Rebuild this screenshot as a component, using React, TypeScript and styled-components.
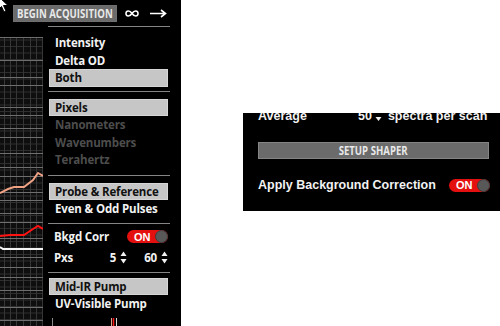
import React from 'react';
import styled, { createGlobalStyle } from 'styled-components';

const GlobalStyle = createGlobalStyle`
  html, body {
    margin: 0;
    padding: 0;
    background: #ffffff;
  }
  body {
    font-family: "Open Sans", "Liberation Sans", sans-serif;
  }
  svg {
    display: block;
  }
`;

type MenuItem = {
  label: string;
  selected?: boolean;
  disabled?: boolean;
};

const Page = styled.div`
  display: flex;
  width: 500px;
  height: 326px;
  overflow: hidden;
`;

const LeftPanel = styled.div`
  position: relative;
  width: 181px;
  height: 326px;
  background: #000;
  display: flex;
  flex-direction: column;
  flex-shrink: 0;
  overflow: hidden;
`;

const TopBar = styled.div`
  height: 26px;
  flex-shrink: 0;
  display: flex;
  align-items: center;
  padding-left: 13px;
  gap: 4px;
  color: #fff;
`;

const GreyButton = styled.button<{ $wide?: boolean }>`
  height: 17px;
  width: ${p => (p.$wide ? '231px' : '104px')};
  padding: 0;
  border: 1px solid ${p => (p.$wide ? '#858585' : '#6f6f6f')};
  background: #6b6b6b;
  color: #e8e8e8;
  font-family: "Open Sans", sans-serif;
  font-weight: 700;
  font-size: 12px;
  display: flex;
  align-items: center;
  justify-content: center;
  overflow: hidden;
  white-space: nowrap;
`;

const Narrow = styled.span`
  display: inline-block;
  transform: scaleX(0.8);
`;

const IconGlyph = styled.span`
  width: 22px;
  display: flex;
  justify-content: center;
`;

const Body = styled.div`
  flex: 1;
  min-height: 0;
  display: flex;
  gap: 5px;
`;

const ChartCol = styled.div`
  width: 43px;
  padding-top: 11px;
`;

const Menu = styled.div`
  width: 122px;
  display: flex;
  flex-direction: column;
`;

const Section = styled.div<{ $top?: number; $bottom?: number }>`
  border-top: 1px solid #858585;
  padding: ${p => p.$top ?? 7}px 2px ${p => p.$bottom ?? 5}px 1px;
  display: flex;
  flex-direction: column;
`;

const Item = styled.div<{ $selected?: boolean; $disabled?: boolean }>`
  height: 17.5px;
  box-sizing: border-box;
  display: flex;
  align-items: center;
  padding-left: 5px;
  font-size: 11.5px;
  letter-spacing: -0.15px;
  font-weight: 700;
  white-space: nowrap;
  color: ${p => (p.$disabled ? '#4d4d4d' : p.$selected ? '#111' : '#f2f2f2')};
  background: ${p => (p.$selected ? '#c6c6c6' : 'transparent')};
  border: 1px solid ${p => (p.$selected ? '#d6d6d6' : 'transparent')};
`;

const ControlRow = styled.div<{ $gapTop?: number }>`
  height: 16px;
  margin-top: ${p => p.$gapTop ?? 0}px;
  display: flex;
  align-items: center;
  padding-left: 5px;
  font-size: 11.5px;
  letter-spacing: -0.15px;
  font-weight: 700;
  color: #f2f2f2;
  white-space: nowrap;
`;

const RowLabel = styled.span`
  flex: 1;
`;

const Spin = styled.div`
  display: flex;
  align-items: center;
  gap: 4px;
  margin-left: 17px;
`;

const Toggle = styled.div`
  width: 41px;
  height: 13px;
  box-sizing: border-box;
  border-radius: 7px;
  background: #e3100f;
  display: flex;
  align-items: center;
  justify-content: space-between;
  padding-left: 7px;
  color: #fff;
  font-family: "Liberation Sans", Arial, sans-serif;
  font-size: 11px;
  font-weight: 700;
  letter-spacing: 0;
`;

const Knob = styled.div`
  width: 13px;
  height: 13px;
  box-sizing: border-box;
  border-radius: 50%;
  background: #585858;
  border: 1px solid #3c3c3c;
`;

const BottomTicks = styled.div`
  margin-top: auto;
  height: 10px;
`;

const Cursor = styled.svg`
  position: absolute;
  left: -3px;
  top: -5px;
`;

const RightArea = styled.div`
  flex: 1;
  padding: 113px 0 0 62px;
`;

const Panel = styled.div`
  width: 257px;
  height: 98px;
  box-sizing: border-box;
  background: #000;
  overflow: hidden;
  padding: 0 10px 0 15px;
  font-family: "Liberation Sans", Arial, sans-serif;
  font-weight: 700;
  font-size: 12.5px;
  color: #f2f2f2;
  display: flex;
  flex-direction: column;
`;

const AverageRow = styled.div`
  margin-top: -5px;
  height: 16px;
  display: flex;
  align-items: center;
  white-space: nowrap;
`;

const AvgLabel = styled.span`
  width: 100px;
`;

const AvgValue = styled.span`
  display: flex;
  align-items: center;
  gap: 3px;
  margin-right: 6px;
`;

const ShaperWrap = styled.div`
  margin-top: 18px;
`;

const ApplyRow = styled.div`
  margin-top: 19px;
  display: flex;
  align-items: center;
  justify-content: space-between;
  white-space: nowrap;
`;

const menuA: MenuItem[] = [
  { label: 'Intensity' },
  { label: 'Delta OD' },
  { label: 'Both', selected: true },
];

const menuB: MenuItem[] = [
  { label: 'Pixels', selected: true },
  { label: 'Nanometers', disabled: true },
  { label: 'Wavenumbers', disabled: true },
  { label: 'Terahertz', disabled: true },
];

const menuC: MenuItem[] = [
  { label: 'Probe & Reference', selected: true },
  { label: 'Even & Odd Pulses' },
];

const menuD: MenuItem[] = [
  { label: 'Mid-IR Pump', selected: true },
  { label: 'UV-Visible Pump' },
];

const majorLines = [
  37, 60, 77, 85, 107, 115, 128, 137, 153, 167, 176, 192, 200, 213, 222, 238,
  257, 267, 277, 290, 298, 307, 320,
];

const Chart = () => {
  const top = 37;
  const h = 289;
  const fine: React.ReactNode[] = [];
  for (let y = 3; y < h; y += 6.5) {
    fine.push(<line key={'h' + y} x1={0} x2={43} y1={y} y2={y} stroke="#2e2e2e" strokeWidth={1} />);
  }
  [4, 10, 16, 23, 30, 36, 42].forEach(x =>
    fine.push(<line key={'v' + x} x1={x + 0.5} x2={x + 0.5} y1={0} y2={h} stroke="#363636" strokeWidth={1} />)
  );
  const p = (pts: number[][]) => pts.map(([x, y]) => `${x},${y - top}`).join(' ');
  return (
    <svg width={43} height={h} viewBox={`0 0 43 ${h}`}>
      <rect width={43} height={h} fill="#0e0e0e" />
      {fine}
      {majorLines.map(y => (
        <line key={y} x1={0} x2={43} y1={y - top + 0.5} y2={y - top + 0.5} stroke="#6e6e6e" strokeWidth={1} />
      ))}
      <polyline
        points={p([[0, 193], [8, 189], [14, 187], [24, 187], [33, 180], [38, 173], [43, 176]])}
        fill="none"
        stroke="#f0a285"
        strokeWidth={2}
      />
      <polyline
        points={p([[0, 236], [10, 235], [24, 235], [33, 229], [38, 226], [43, 229]])}
        fill="none"
        stroke="#ff1212"
        strokeWidth={2}
      />
      <polyline points={p([[0, 247], [3, 249], [43, 249]])} fill="none" stroke="#f4f4f4" strokeWidth={2} />
    </svg>
  );
};

const SpinArrows = () => (
  <svg width={7} height={13} viewBox="0 0 7 13">
    <path d="M3.5 0.5 L6.5 5 L0.5 5 Z" fill="#f2f2f2" />
    <path d="M3.5 12.5 L6.5 8 L0.5 8 Z" fill="#f2f2f2" />
  </svg>
);

const DownArrow = () => (
  <svg width={7} height={12} viewBox="0 0 7 12">
    <path d="M0.5 7 L6.5 7 L3.5 11 Z" fill="#f2f2f2" />
  </svg>
);

const OnSwitch = () => (
  <Toggle>
    ON
    <Knob />
  </Toggle>
);

const renderItems = (items: MenuItem[]) =>
  items.map(item => (
    <Item key={item.label} $selected={item.selected} $disabled={item.disabled}>
      {item.label}
    </Item>
  ));

export default function App() {
  return (
    <>
      <GlobalStyle />
      <Page>
        <LeftPanel>
          <TopBar>
            <GreyButton>
              <Narrow>BEGIN ACQUISITION</Narrow>
            </GreyButton>
            <IconGlyph>
              <svg width={14} height={9} viewBox="0 0 14 9">
                <path
                  d="M7 4.5 C5 1.5 1 1 1 4.5 C1 8 5 7.5 7 4.5 C9 1.5 13 1 13 4.5 C13 8 9 7.5 7 4.5 Z"
                  fill="none"
                  stroke="#fff"
                  strokeWidth={1.6}
                />
              </svg>
            </IconGlyph>
            <IconGlyph>
              <svg width={17} height={9} viewBox="0 0 17 9">
                <path d="M0 4.5 H15 M11 1 L15.5 4.5 L11 8" fill="none" stroke="#fff" strokeWidth={1.6} />
              </svg>
            </IconGlyph>
          </TopBar>
          <Body>
            <ChartCol>
              <Chart />
            </ChartCol>
            <Menu>
              <Section $top={7} $bottom={4}>{renderItems(menuA)}</Section>
              <Section $top={7} $bottom={6}>{renderItems(menuB)}</Section>
              <Section $top={7} $bottom={5}>{renderItems(menuC)}</Section>
              <Section $top={5} $bottom={6}>
                <ControlRow>
                  <RowLabel>Bkgd Corr</RowLabel>
                  <OnSwitch />
                </ControlRow>
                <ControlRow $gapTop={5}>
                  <RowLabel>Pxs</RowLabel>
                  <Spin>
                    5
                    <SpinArrows />
                  </Spin>
                  <Spin>
                    60
                    <SpinArrows />
                  </Spin>
                </ControlRow>
              </Section>
              <Section $top={5} $bottom={0}>{renderItems(menuD)}</Section>
              <BottomTicks>
                <svg width={122} height={10} viewBox="0 0 122 10">
                  <line x1={4.5} x2={4.5} y1={2} y2={10} stroke="#8a8a8a" />
                  <line x1={63.5} x2={63.5} y1={2} y2={10} stroke="#d9a58c" />
                  <line x1={65.5} x2={65.5} y1={2} y2={10} stroke="#ff1a1a" strokeWidth={1.5} />
                  <line x1={68.5} x2={68.5} y1={2} y2={10} stroke="#dddddd" />
                </svg>
              </BottomTicks>
            </Menu>
          </Body>
          <Cursor width={12} height={18} viewBox="0 0 12 18">
            <path d="M1 1 L1 15 L4.5 11.5 L7 17 L9 16 L6.5 10.5 L11 10.5 Z" fill="#fff" stroke="#000" strokeWidth={1} />
          </Cursor>
        </LeftPanel>
        <RightArea>
          <Panel>
            <AverageRow>
              <AvgLabel>Average</AvgLabel>
              <AvgValue>
                50
                <DownArrow />
              </AvgValue>
              <span>spectra per scan</span>
            </AverageRow>
            <ShaperWrap>
              <GreyButton $wide>
                <Narrow>SETUP SHAPER</Narrow>
              </GreyButton>
            </ShaperWrap>
            <ApplyRow>
              <span>Apply Background Correction</span>
              <OnSwitch />
            </ApplyRow>
          </Panel>
        </RightArea>
      </Page>
    </>
  );
}
